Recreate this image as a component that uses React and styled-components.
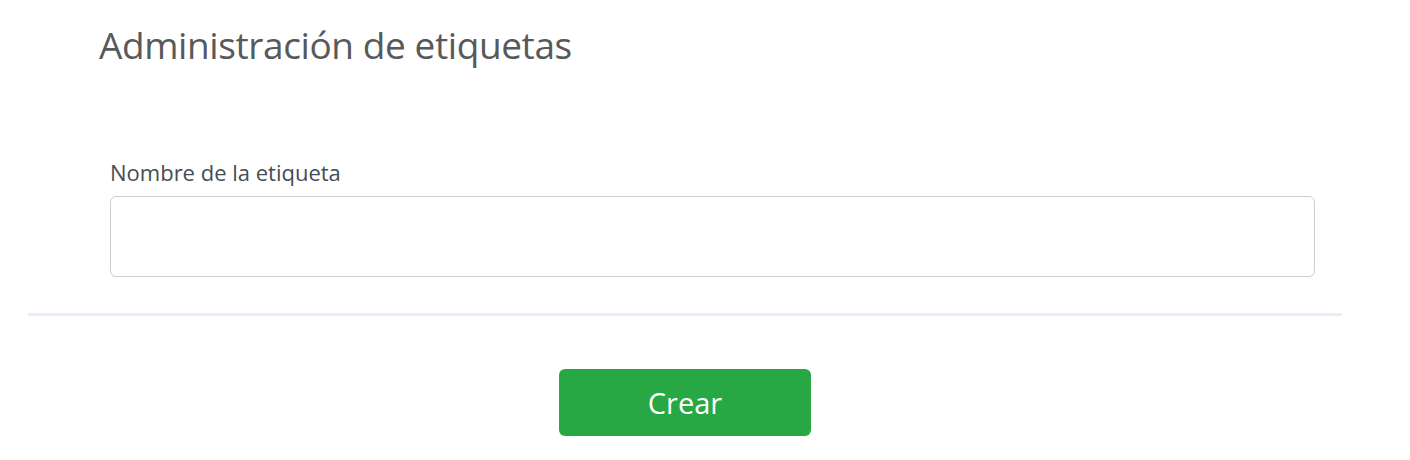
import React from 'react';
import styled, { createGlobalStyle } from 'styled-components';

const GlobalStyle = createGlobalStyle`
  body {
    margin: 0;
    background: #fff;
    font-family: "Open Sans", "Noto Sans", sans-serif;
  }
`;

const Page = styled.div`
  width: 1314px;
  margin-left: 28px;
  display: flex;
  flex-direction: column;
`;

const Title = styled.h1`
  margin: 19px 0 0 71px;
  font-size: 37px;
  font-weight: 400;
  line-height: 52px;
  letter-spacing: -0.4px;
  color: #58595b;
`;

const Form = styled.div`
  display: flex;
  flex-direction: column;
  padding: 0 27px 0 82px;
  margin-top: 87px;
`;

const Label = styled.label`
  font-size: 22px;
  line-height: 28px;
  color: #474c55;
  margin-bottom: 10px;
`;

const Input = styled.input`
  box-sizing: border-box;
  width: 100%;
  height: 81px;
  border: 1px solid #cfcfcf;
  border-radius: 6px;
  padding: 0 16px;
  font-family: inherit;
  font-size: 19px;
  outline: none;
`;

const Divider = styled.hr`
  width: 100%;
  margin: 36px 0 0;
  border: none;
  height: 3px;
  background: #e6effa;
`;

const Footer = styled.div`
  display: flex;
  justify-content: center;
  padding-top: 53px;
`;

const Button = styled.button`
  width: 252px;
  height: 67px;
  border: none;
  border-radius: 6px;
  background: #28a745;
  color: #fff;
  font-family: inherit;
  font-size: 29px;
  cursor: pointer;
`;

export default function App() {
  return (
    <>
      <GlobalStyle />
      <Page>
        <Title>Administración de etiquetas</Title>
        <Form>
          <Label htmlFor="tag-name">Nombre de la etiqueta</Label>
          <Input id="tag-name" type="text" />
        </Form>
        <Divider />
        <Footer>
          <Button>Crear</Button>
        </Footer>
      </Page>
    </>
  );
}
